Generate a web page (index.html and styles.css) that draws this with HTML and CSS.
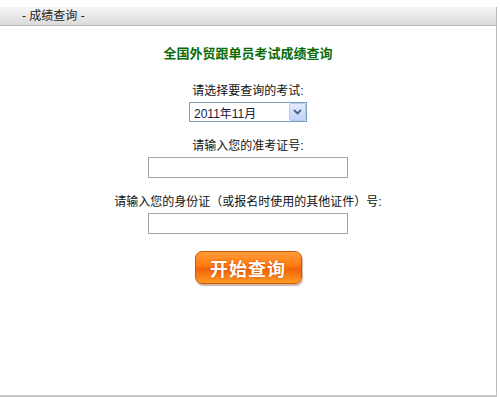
FILE: index.html
```html
<!DOCTYPE html>
<html>

<head>
  <title>成绩查询</title>
  <link rel="stylesheet" href="styles.css">
</head>

<body class="main">
  <div class="box">
    <div class="bar">- 成绩查询 -</div>
    <form class="query" onsubmit="return false">
      <h3 class="title">全国外贸跟单员考试成绩查询</h3>
      <label class="lab">请选择要查询的考试:</label>
      <div class="sel">
        <span class="sel-val">2011年11月</span>
        <span class="sel-btn">
          <svg width="9" height="6" viewBox="0 0 9 6"><path d="M1 1 L4.5 4.5 L8 1" fill="none" stroke="#4d6185" stroke-width="1.8"/></svg>
        </span>
      </div>
      <label class="lab lab2">请输入您的准考证号:</label>
      <input class="ip" type="text" name="zkz">
      <label class="lab lab2">请输入您的身份证（或报名时使用的其他证件）号:</label>
      <input class="ip" type="text" name="sfz">
      <button class="sub" type="submit">开始查询</button>
    </form>
  </div>
</body>

</html>
```

FILE: styles.css
```css
.main {
  margin: 0;
  background: #fff;
  font-family: "Liberation Sans", Arial, "Noto Sans CJK SC", sans-serif;
  font-size: 12px;
  color: #000;
}

.box {
  width: 496px;
  height: 388px;
  margin-top: 7px;
  border-right: 1px solid #bcbcbc;
  border-bottom: 2px solid #c8c8c8;
}

.bar {
  height: 18px;
  line-height: 19px;
  padding-left: 22px;
  background: linear-gradient(#f6f6f6, #e6e6e6 60%, #dadada);
  border-bottom: 1px solid #b9b9b9;
  font-size: 12px;
  color: #222;
}

.query {
  display: flex;
  flex-direction: column;
  align-items: center;
}

.title {
  margin: 20px 0 0;
  font-size: 13px;
  line-height: 16px;
  font-weight: bold;
  color: #0a6b0a;
}

.lab {
  margin-top: 22px;
  line-height: 14px;
  font-size: 12px;
  color: #111;
}

.lab2 {
  margin-top: 17px;
}

.sel {
  display: flex;
  align-items: center;
  justify-content: space-between;
  box-sizing: border-box;
  width: 118px;
  height: 20px;
  margin-top: 4px;
  border: 1px solid #7f9db9;
  background: #fff;
  font-size: 12px;
}

.sel-val {
  padding-left: 4px;
  color: #1a1a40;
}

.sel-btn {
  display: flex;
  align-items: center;
  justify-content: center;
  width: 17px;
  height: 18px;
  border: 1px solid #b7c9ee;
  border-radius: 2px;
  box-sizing: border-box;
  background: linear-gradient(#e3ebfd, #c2d3fa);
}

.ip {
  box-sizing: border-box;
  width: 200px;
  height: 21px;
  margin-top: 4px;
  border: 1px solid #a5a5a5;
  background: #fff;
}

.sub {
  width: 107px;
  height: 33px;
  margin-top: 17px;
  border: 1px solid #d0540a;
  border-radius: 7px;
  background: linear-gradient(#ff9d3a, #ff7a10 45%, #f2620a 55%, #ff9b22);
  box-shadow: 1px 2px 1px #c9b7aa;
  color: #fff;
  font-family: "Noto Sans CJK SC", sans-serif;
  font-size: 18px;
  letter-spacing: 1px;
  font-weight: bold;
  text-shadow: 0 0 2px #c04a00;
  padding: 0;
}
```
